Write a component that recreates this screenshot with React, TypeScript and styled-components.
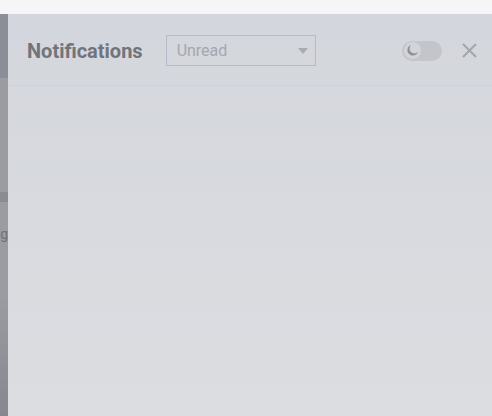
import React from "react";
import styled, { createGlobalStyle } from "styled-components";

const Global = createGlobalStyle`
  html, body { margin: 0; padding: 0; background: #f6f6f6; }
  body { font-family: Roboto, "Noto Sans", sans-serif; }
`;

const Page = styled.div`
  width: 492px;
  height: 416px;
  display: flex;
  flex-direction: column;
  overflow: hidden;
`;

const TopBar = styled.div`
  height: 14px;
  flex: none;
  background: #f6f6f6;
`;

const Body = styled.div`
  flex: 1;
  display: flex;
  min-height: 0;
`;

const Side = styled.div`
  width: 8px;
  flex: none;
  display: flex;
  flex-direction: column;
  overflow: hidden;
  background: linear-gradient(#9a9ca2, #9a9ca2 70%, #86888f);
`;

const SideBlock = styled.div<{ $h?: number; $bg?: string; $grow?: boolean }>`
  height: ${(p) => (p.$h ? `${p.$h}px` : "auto")};
  flex: ${(p) => (p.$grow ? 1 : "none")};
  background: ${(p) => p.$bg || "transparent"};
`;

const SideLabel = styled.div`
  height: 20px;
  display: flex;
  justify-content: flex-end;
  align-items: center;
  font-size: 14px;
  color: #6f7279;
  white-space: nowrap;
  margin-top: 22px;
`;

const Panel = styled.div`
  flex: 1;
  display: flex;
  flex-direction: column;
  background: linear-gradient(180deg, #d3d6dc 0%, #d8dadf 50%, #dcdde1 100%);
`;

const Header = styled.div`
  height: 69px;
  flex: none;
  display: flex;
  align-items: center;
  padding: 2px 15px 0 19px;
  border-bottom: 1px solid #cdd0d5;
  box-sizing: content-box;
`;

const Title = styled.h2`
  margin: 0 23px 0 0;
  font-size: 20px;
  font-weight: 700;
  color: #71747b;
`;

const Select = styled.div`
  width: 131px;
  height: 29px;
  border: 1px solid #b4bccb;
  display: flex;
  align-items: center;
  justify-content: space-between;
  padding: 0 7px 0 10px;
  box-sizing: content-box;
`;

const SelectText = styled.span`
  font-size: 16px;
  color: #a4a7ae;
`;

const Caret = styled.span`
  width: 0;
  height: 0;
  border-left: 5px solid transparent;
  border-right: 5px solid transparent;
  border-top: 6px solid #a9abb1;
`;

const Spacer = styled.div`
  flex: 1;
`;

const Toggle = styled.div`
  width: 40px;
  height: 20px;
  border-radius: 10px;
  background: #c3c5cb;
  display: flex;
  align-items: center;
  padding: 0 2px;
  box-sizing: border-box;
  margin-right: 19px;
`;

const Knob = styled.div`
  width: 17px;
  height: 17px;
  border-radius: 50%;
  background: #d2d4d9;
  display: flex;
  align-items: center;
  justify-content: center;
`;

const Close = styled.button`
  width: 16px;
  height: 16px;
  padding: 0;
  border: none;
  background: transparent;
  display: flex;
  align-items: center;
  justify-content: center;
`;

const Content = styled.div`
  flex: 1;
`;

export default function App() {
  return (
    <>
      <Global />
      <Page>
        <TopBar />
        <Body>
          <Side>
            <SideBlock $h={64} $bg="#8b8e96" />
            <SideBlock $h={114} />
            <SideBlock $h={10} $bg="#8a8c93" />
            <SideLabel>Setting</SideLabel>
            <SideBlock $grow />
          </Side>
          <Panel>
            <Header>
              <Title>Notifications</Title>
              <Select>
                <SelectText>Unread</SelectText>
                <Caret />
              </Select>
              <Spacer />
              <Toggle>
                <Knob>
                  <svg width="13" height="13" viewBox="0 0 12 12">
                    <path
                      d="M4.6 1 A5 5 0 1 0 11 7.4 A4 4 0 0 1 4.6 1 Z"
                      fill="#8f9198"
                    />
                  </svg>
                </Knob>
              </Toggle>
              <Close aria-label="Close">
                <svg width="15" height="15" viewBox="0 0 15 15">
                  <path d="M1 1 L14 14 M14 1 L1 14" stroke="#a4a6ac" strokeWidth="2" />
                </svg>
              </Close>
            </Header>
            <Content />
          </Panel>
        </Body>
      </Page>
    </>
  );
}
